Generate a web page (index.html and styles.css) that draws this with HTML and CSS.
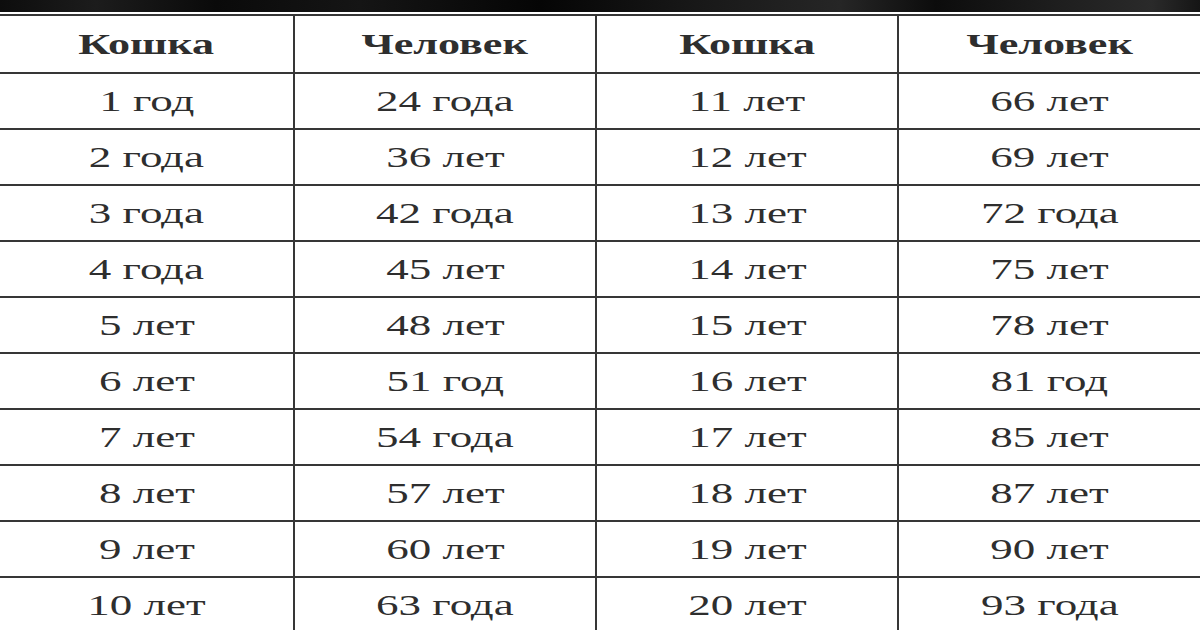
FILE: index.html
```html
<!DOCTYPE html>
<html lang="ru">
<head>
<meta charset="utf-8">
<title>Возраст кошки</title>
<link rel="stylesheet" href="styles.css">
</head>
<body>
<div class="band"></div>
<div class="gap"></div>
<div class="table">
  <div class="cell head"><span>Кошка</span></div>
  <div class="cell head"><span>Человек</span></div>
  <div class="cell head"><span>Кошка</span></div>
  <div class="cell head last"><span>Человек</span></div>

  <div class="cell"><span>1 год</span></div>
  <div class="cell"><span>24 года</span></div>
  <div class="cell"><span>11 лет</span></div>
  <div class="cell last"><span>66 лет</span></div>

  <div class="cell"><span>2 года</span></div>
  <div class="cell"><span>36 лет</span></div>
  <div class="cell"><span>12 лет</span></div>
  <div class="cell last"><span>69 лет</span></div>

  <div class="cell"><span>3 года</span></div>
  <div class="cell"><span>42 года</span></div>
  <div class="cell"><span>13 лет</span></div>
  <div class="cell last"><span>72 года</span></div>

  <div class="cell"><span>4 года</span></div>
  <div class="cell"><span>45 лет</span></div>
  <div class="cell"><span>14 лет</span></div>
  <div class="cell last"><span>75 лет</span></div>

  <div class="cell"><span>5 лет</span></div>
  <div class="cell"><span>48 лет</span></div>
  <div class="cell"><span>15 лет</span></div>
  <div class="cell last"><span>78 лет</span></div>

  <div class="cell"><span>6 лет</span></div>
  <div class="cell"><span>51 год</span></div>
  <div class="cell"><span>16 лет</span></div>
  <div class="cell last"><span>81 год</span></div>

  <div class="cell"><span>7 лет</span></div>
  <div class="cell"><span>54 года</span></div>
  <div class="cell"><span>17 лет</span></div>
  <div class="cell last"><span>85 лет</span></div>

  <div class="cell"><span>8 лет</span></div>
  <div class="cell"><span>57 лет</span></div>
  <div class="cell"><span>18 лет</span></div>
  <div class="cell last"><span>87 лет</span></div>

  <div class="cell"><span>9 лет</span></div>
  <div class="cell"><span>60 лет</span></div>
  <div class="cell"><span>19 лет</span></div>
  <div class="cell last"><span>90 лет</span></div>

  <div class="cell"><span>10 лет</span></div>
  <div class="cell"><span>63 года</span></div>
  <div class="cell"><span>20 лет</span></div>
  <div class="cell last"><span>93 года</span></div>
</div>
</body>
</html>
```

FILE: styles.css
```css
html, body {
  margin: 0;
  padding: 0;
  background: #ffffff;
  overflow: hidden;
}
body {
  width: 1200px;
  height: 630px;
  font-family: "Liberation Serif", "DejaVu Serif", serif;
  color: #2e2e2e;
}
.band {
  height: 12px;
  background:
    linear-gradient(90deg, #0d0d0d 0%, #1c1c1c 8%, #0a0a0a 18%, #151515 30%, #050505 45%, #181818 58%, #262626 70%, #0c0c0c 78%, #1e1e1e 88%, #2a2a2a 96%, #151515 100%);
}
.gap {
  height: 2px;
  background: #ffffff;
}
.table {
  display: grid;
  grid-template-columns: 295px 302px 302px 301px;
  grid-template-rows: 58px;
  grid-auto-rows: 56px;
  border-top: 2px solid #363636;
}
.cell {
  box-sizing: border-box;
  border-right: 2px solid #363636;
  border-bottom: 2px solid #363636;
  display: flex;
  align-items: center;
  justify-content: center;
  font-size: 30px;
  line-height: 1;
}
.cell.last {
  border-right: none;
}
.cell.head {
  font-weight: bold;
}
.cell span {
  display: inline-block;
  transform: scaleX(1.5);
  white-space: nowrap;
}
.cell.head span {
  transform: scaleX(1.47);
}
```
